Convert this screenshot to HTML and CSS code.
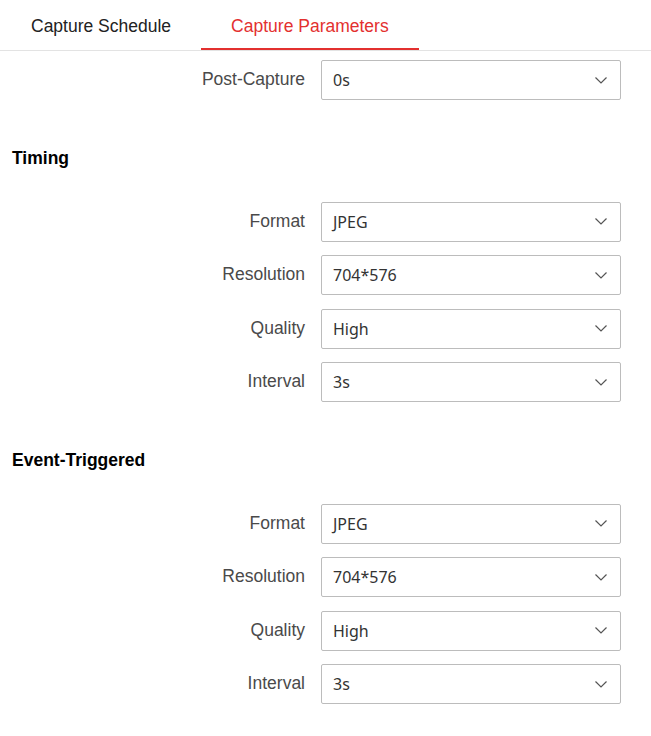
FILE: index.html
```html
<!DOCTYPE html>
<html lang="en">
<head>
    <meta charset="UTF-8">
    <meta name="viewport" content="width=device-width, initial-scale=1.0">
    <title>Capture Parameters</title>
    <link rel="stylesheet" href="styles.css">
</head>
<body>
    <div class="tabs">
        <div class="tab">Capture Schedule</div>
        <div class="tab active">Capture Parameters</div>
    </div>

    <div class="form">
        <div class="row">
            <label class="label">Post-Capture</label>
            <div class="select"><span>0s</span><svg class="arrow" width="12" height="7" viewBox="0 0 12 7"><path d="M0.5 0.5 L6 6 L11.5 0.5" fill="none" stroke="#555" stroke-width="1.2"/></svg></div>
        </div>

        <h3 class="section-title">Timing</h3>
        <div class="row">
            <label class="label">Format</label>
            <div class="select"><span>JPEG</span><svg class="arrow" width="12" height="7" viewBox="0 0 12 7"><path d="M0.5 0.5 L6 6 L11.5 0.5" fill="none" stroke="#555" stroke-width="1.2"/></svg></div>
        </div>
        <div class="row">
            <label class="label">Resolution</label>
            <div class="select"><span>704*576</span><svg class="arrow" width="12" height="7" viewBox="0 0 12 7"><path d="M0.5 0.5 L6 6 L11.5 0.5" fill="none" stroke="#555" stroke-width="1.2"/></svg></div>
        </div>
        <div class="row">
            <label class="label">Quality</label>
            <div class="select"><span>High</span><svg class="arrow" width="12" height="7" viewBox="0 0 12 7"><path d="M0.5 0.5 L6 6 L11.5 0.5" fill="none" stroke="#555" stroke-width="1.2"/></svg></div>
        </div>
        <div class="row">
            <label class="label">Interval</label>
            <div class="select"><span>3s</span><svg class="arrow" width="12" height="7" viewBox="0 0 12 7"><path d="M0.5 0.5 L6 6 L11.5 0.5" fill="none" stroke="#555" stroke-width="1.2"/></svg></div>
        </div>

        <h3 class="section-title">Event-Triggered</h3>
        <div class="row">
            <label class="label">Format</label>
            <div class="select"><span>JPEG</span><svg class="arrow" width="12" height="7" viewBox="0 0 12 7"><path d="M0.5 0.5 L6 6 L11.5 0.5" fill="none" stroke="#555" stroke-width="1.2"/></svg></div>
        </div>
        <div class="row">
            <label class="label">Resolution</label>
            <div class="select"><span>704*576</span><svg class="arrow" width="12" height="7" viewBox="0 0 12 7"><path d="M0.5 0.5 L6 6 L11.5 0.5" fill="none" stroke="#555" stroke-width="1.2"/></svg></div>
        </div>
        <div class="row">
            <label class="label">Quality</label>
            <div class="select"><span>High</span><svg class="arrow" width="12" height="7" viewBox="0 0 12 7"><path d="M0.5 0.5 L6 6 L11.5 0.5" fill="none" stroke="#555" stroke-width="1.2"/></svg></div>
        </div>
        <div class="row">
            <label class="label">Interval</label>
            <div class="select"><span>3s</span><svg class="arrow" width="12" height="7" viewBox="0 0 12 7"><path d="M0.5 0.5 L6 6 L11.5 0.5" fill="none" stroke="#555" stroke-width="1.2"/></svg></div>
        </div>
    </div>
</body>
</html>
```

FILE: styles.css
```css
body {
    font-family: "Liberation Sans", Arial, sans-serif;
    font-size: 17.5px;
    background-color: #ffffff;
    margin: 0;
    padding: 0;
}
.tabs {
    display: flex;
    height: 50px;
    padding-left: 1px;
    border-bottom: 1px solid #e3e3e3;
}
.tab {
    padding: 1px 30px 0;
    line-height: 50px;
    height: 47px;
    color: #222;
    border-bottom: 2px solid transparent;
}
.tab.active {
    color: #e3302f;
    border-bottom-color: #e3302f;
}
.form {
    padding-top: 9px;
}
.row {
    display: flex;
    align-items: center;
    height: 40px;
    margin-bottom: 13.5px;
}
.label {
    width: 305px;
    text-align: right;
    color: #4a4a4a;
    padding-right: 16px;
    line-height: 20px;
    margin-top: -2px;
}
.select {
    box-sizing: border-box;
    width: 300px;
    height: 40px;
    border: 1px solid #bcbcbc;
    border-radius: 2px;
    display: flex;
    align-items: center;
    justify-content: space-between;
    padding: 0 13px 0 11px;
    font-family: "Noto Sans", sans-serif;
    font-size: 16px;
    color: #333;
}
.arrow {
    display: block;
}
.section-title {
    font-size: 17.5px;
    font-weight: bold;
    color: #000;
    line-height: 20px;
    margin: 46px 0 34px 12px;
}
.row + .section-title {
    margin-top: 47.5px;
}
```
